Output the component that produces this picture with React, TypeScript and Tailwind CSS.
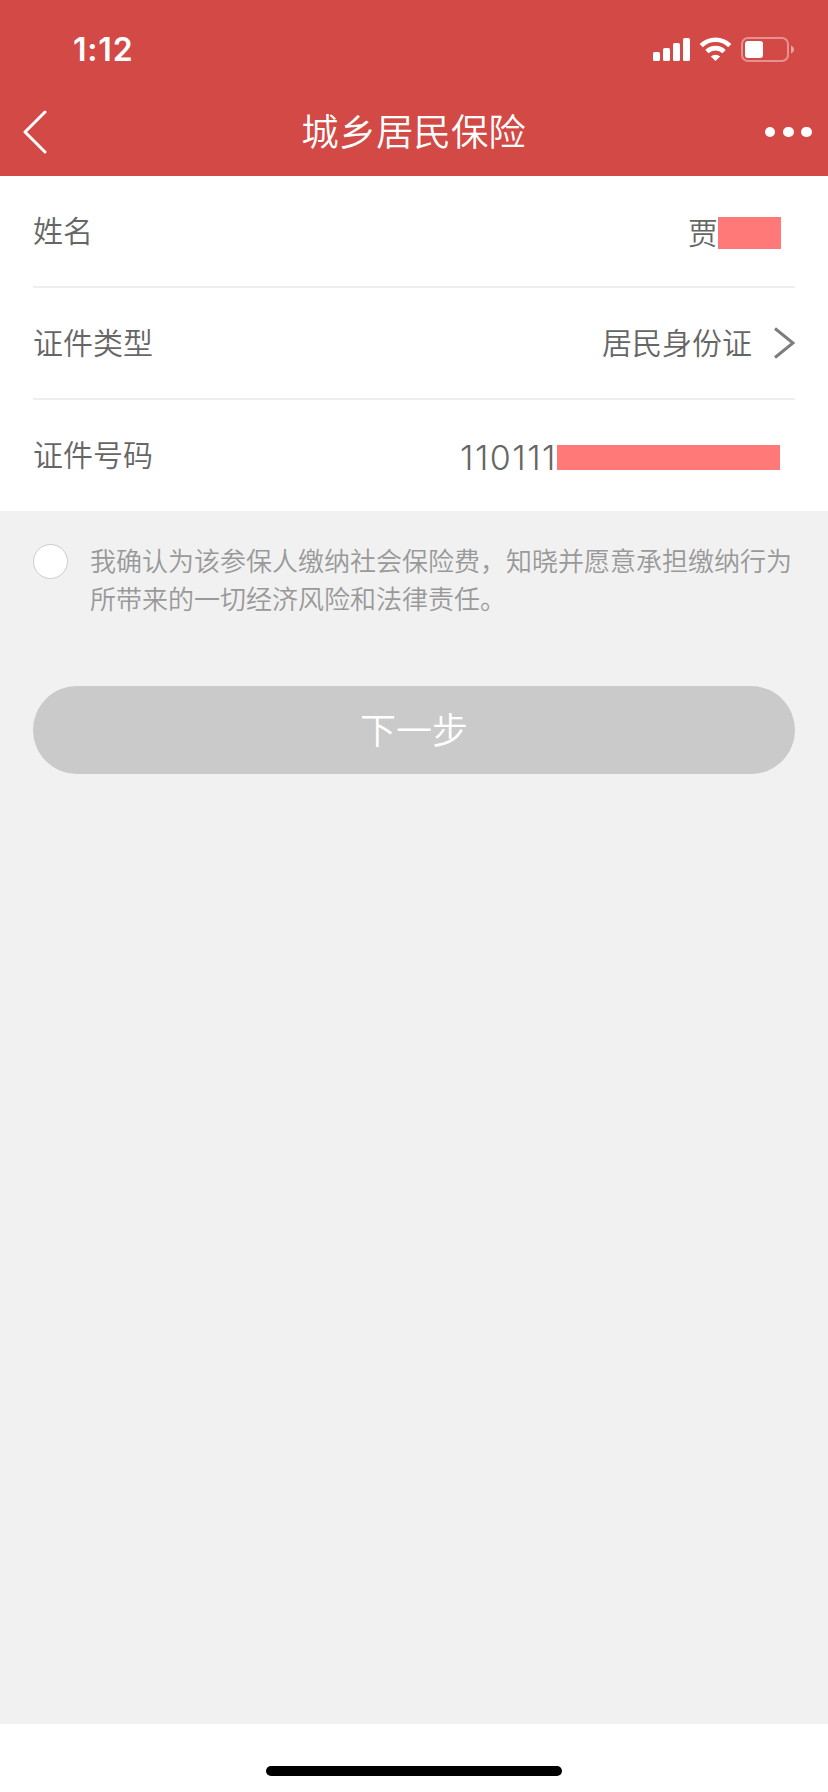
import React, { useState } from "react";

// ─── Status bar ───────────────────────────────────────────────────────────────

const StatusIcons: React.FC = () => (
  <svg width="142" height="26" viewBox="0 0 142 26" fill="none" className="shrink-0">
    {/* Signal */}
    <g fill="#fff">
      <rect x="0" y="15" width="7" height="9" rx="1.6" />
      <rect x="10" y="11" width="7" height="13" rx="1.6" />
      <rect x="20" y="6" width="7" height="18" rx="1.6" />
      <rect x="30" y="1" width="7" height="23" rx="1.6" />
    </g>
    {/* Wifi */}
    <g stroke="#fff" strokeWidth="4.6">
      <path d="M48.2 8.6a20.4 20.4 0 0 1 28.6 0" />
      <path d="M53.9 14.7a12.2 12.2 0 0 1 17.2 0" />
    </g>
    <path d="M62.5 24l-4.7-4.4a6.8 6.8 0 0 1 9.4 0z" fill="#fff" />
    {/* Battery */}
    <rect x="89" y="1" width="46" height="23" rx="6" stroke="#fff" strokeOpacity="0.4" strokeWidth="2" />
    <rect x="92" y="4" width="18" height="17" rx="3" fill="#fff" />
    <path d="M138 8.5c4 1.5 4 6.5 0 8z" fill="#fff" fillOpacity="0.5" />
  </svg>
);

const StatusBar: React.FC = () => (
  <div className="flex h-[88px] items-start justify-between pl-[73px] pr-[33px]">
    <span className="mt-[30px] font-[Inter] text-[32px] leading-10 font-semibold tracking-[0.8px]">1:12</span>
    <div className="mt-[37px]">
      <StatusIcons />
    </div>
  </div>
);

// ─── Nav bar ──────────────────────────────────────────────────────────────────

const NavBar: React.FC = () => (
  <div className="flex h-[88px] items-center justify-between pr-4 pl-[23px]">
    <button aria-label="返回" className="flex w-[39px]">
      <svg width="24" height="44" viewBox="0 0 24 44" fill="none" stroke="#fff" strokeWidth="3" strokeLinecap="round" strokeLinejoin="round">
        <path d="M22 2L2 22L22 42" />
      </svg>
    </button>
    <h1 className="mb-1 text-[37.4px] leading-[44px] font-[350]">城乡居民保险</h1>
    <button aria-label="更多" className="flex w-[47px] justify-between">
      <span className="size-[10.5px] rounded-full bg-white" />
      <span className="size-[10.5px] rounded-full bg-white" />
      <span className="size-[10.5px] rounded-full bg-white" />
    </button>
  </div>
);

// ─── Form ─────────────────────────────────────────────────────────────────────

interface RowProps {
  label: string;
  last?: boolean;
  children: React.ReactNode;
}

const Row: React.FC<RowProps> = ({ label, last, children }) => (
  <div
    className={`flex items-center justify-between text-[30px] leading-10 font-[350] text-[#666] ${
      last ? "h-[111px]" : "h-28 border-b-2 border-[#eee]"
    }`}
  >
    <span className={last ? "mb-1.5" : "mb-1"}>{label}</span>
    {children}
  </div>
);

export default function App() {
  const [agreed, setAgreed] = useState(false);

  return (
    <div className="flex h-[1792px] w-[828px] flex-col bg-[#f1f1f1] font-['Noto_Sans_CJK_SC',sans-serif]">
      <header className="bg-[#d24945] text-white">
        <StatusBar />
        <NavBar />
      </header>

      <section className="bg-white px-[33px]">
        <Row label="姓名">
          <div className="mt-1 mr-3.5 flex items-center">
            <span className="mb-1">贾</span>
            <span className="h-8 w-[63px] bg-[#ff7979]" />
          </div>
        </Row>
        <Row label="证件类型">
          <div className="flex items-center gap-[22px]">
            <span className="mb-1">居民身份证</span>
            <svg width="21" height="32" viewBox="0 0 21 32" fill="none" stroke="#7d7d7d" strokeWidth="3">
              <path d="M1 1.5L19 16L1 30.5" />
            </svg>
          </div>
        </Row>
        <Row label="证件号码" last>
          <div className="mt-1 mr-[15px] flex items-center">
            <span className="font-[Inter] text-[34px] font-light tracking-[1.5px]">110111</span>
            <span className="h-[25px] w-[223px] bg-[#ff7979]" />
          </div>
        </Row>
      </section>

      <label className="mt-[31px] flex items-start pl-[33px]">
        <input
          type="checkbox"
          checked={agreed}
          onChange={(e) => setAgreed(e.target.checked)}
          className="mt-0.5 size-[35px] shrink-0 appearance-none rounded-full border border-[#ccc] bg-white checked:bg-[#d24945]"
        />
        <span className="-mt-px ml-[22px] w-[704px] text-[26px] leading-[38px] font-[350] text-[#999]">
          我确认为该参保人缴纳社会保险费，知晓并愿意承担缴纳行为所带来的一切经济风险和法律责任。
        </span>
      </label>

      <button
        className={`mx-[33px] mt-[69px] h-[88px] rounded-full pb-[5px] text-4xl font-[350] text-white ${
          agreed ? "bg-[#d24945]" : "bg-[#cacaca]"
        }`}
      >
        下一步
      </button>

      {/* Home indicator */}
      <footer className="mt-auto flex h-[68px] items-end justify-center bg-white pb-4">
        <div className="h-2.5 w-[296px] rounded-full bg-black" />
      </footer>
    </div>
  );
}
